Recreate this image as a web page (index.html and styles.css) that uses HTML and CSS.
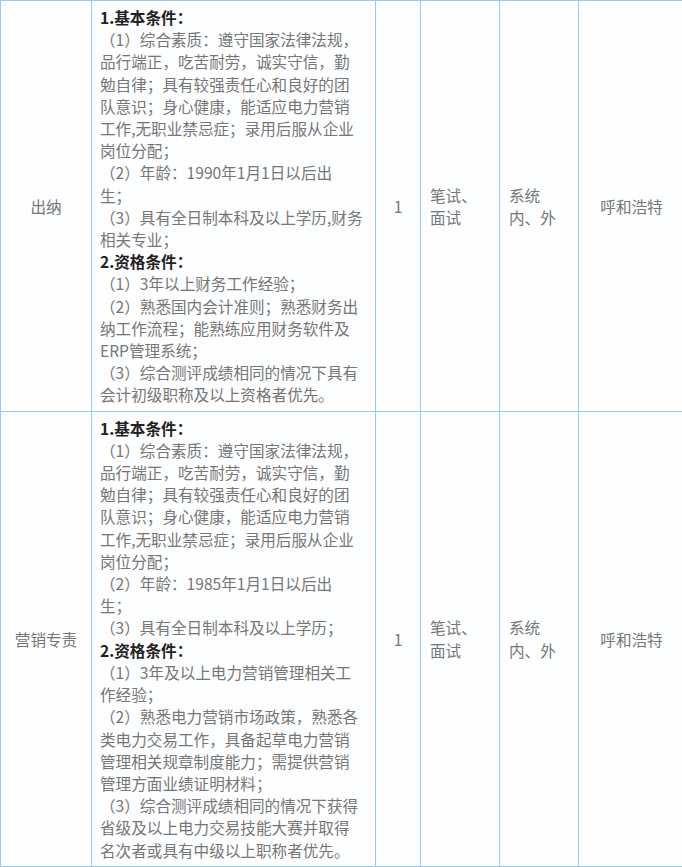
FILE: index.html
```html
<!DOCTYPE html>
<html lang="zh-CN">
<head>
<meta charset="utf-8">
<title>岗位条件</title>
<link rel="stylesheet" href="styles.css">
</head>
<body>
<table class="jobs">
  <colgroup>
    <col class="c-name">
    <col class="c-req">
    <col class="c-num">
    <col class="c-way">
    <col class="c-scope">
    <col class="c-place">
  </colgroup>
  <tr>
    <td class="name">出纳</td>
    <td class="req">
      <p class="head">1.基本条件：</p>
      <p>（1）综合素质：遵守国家法律法规，<br>品行端正，吃苦耐劳，诚实守信，勤<br>勉自律；具有较强责任心和良好的团<br>队意识；身心健康，能适应电力营销<br>工作,无职业禁忌症；录用后服从企业<br>岗位分配；</p>
      <p>（2）年龄：1990年1月1日以后出<br>生；</p>
      <p>（3）具有全日制本科及以上学历,财务<br>相关专业；</p>
      <p class="head">2.资格条件：</p>
      <p>（1）3年以上财务工作经验；</p>
      <p>（2）熟悉国内会计准则；熟悉财务出<br>纳工作流程；能熟练应用财务软件及<br>ERP管理系统；</p>
      <p>（3）综合测评成绩相同的情况下具有<br>会计初级职称及以上资格者优先。</p>
    </td>
    <td class="num">1</td>
    <td class="way">笔试、<br>面试</td>
    <td class="scope">系统<br>内、外</td>
    <td class="place">呼和浩特</td>
  </tr>
  <tr>
    <td class="name">营销专责</td>
    <td class="req">
      <p class="head">1.基本条件：</p>
      <p>（1）综合素质：遵守国家法律法规，<br>品行端正，吃苦耐劳，诚实守信，勤<br>勉自律；具有较强责任心和良好的团<br>队意识；身心健康，能适应电力营销<br>工作,无职业禁忌症；录用后服从企业<br>岗位分配；</p>
      <p>（2）年龄：1985年1月1日以后出<br>生；</p>
      <p>（3）具有全日制本科及以上学历；</p>
      <p class="head">2.资格条件：</p>
      <p>（1）3年及以上电力营销管理相关工<br>作经验；</p>
      <p>（2）熟悉电力营销市场政策，熟悉各<br>类电力交易工作，具备起草电力营销<br>管理相关规章制度能力；需提供营销<br>管理方面业绩证明材料；</p>
      <p>（3）综合测评成绩相同的情况下获得<br>省级及以上电力交易技能大赛并取得<br>名次者或具有中级以上职称者优先。</p>
    </td>
    <td class="num">1</td>
    <td class="way">笔试、<br>面试</td>
    <td class="scope">系统<br>内、外</td>
    <td class="place">呼和浩特</td>
  </tr>
</table>
</body>
</html>
```

FILE: styles.css
```css
html, body {
  margin: 0;
  padding: 0;
  background: #ffffff;
  overflow: hidden;
}

body {
  font-family: "Noto Sans CJK SC", "Noto Sans", sans-serif;
  font-size: 15.6px;
  color: #767676;
}

.jobs {
  border-collapse: collapse;
  table-layout: fixed;
  width: 684px;
  background: #fdfeff;
}

.c-name { width: 91px; }
.c-req { width: 284px; }
.c-num { width: 45px; }
.c-way { width: 79px; }
.c-scope { width: 79px; }
.c-place { width: 106px; }

.jobs td {
  border: 1px solid #93cbf1;
  vertical-align: middle;
  line-height: 22.2px;
  padding: 0;
}

.name {
  text-align: center;
}

.req {
  padding: 5px 4px 5px 8px !important;
  white-space: nowrap;
}

.req p {
  margin: 0;
}

.req .head {
  font-weight: 700;
  color: #222;
}

.num {
  text-align: center;
}

.way, .scope {
  padding-left: 9px !important;
}

.place {
  text-align: center;
}
```
